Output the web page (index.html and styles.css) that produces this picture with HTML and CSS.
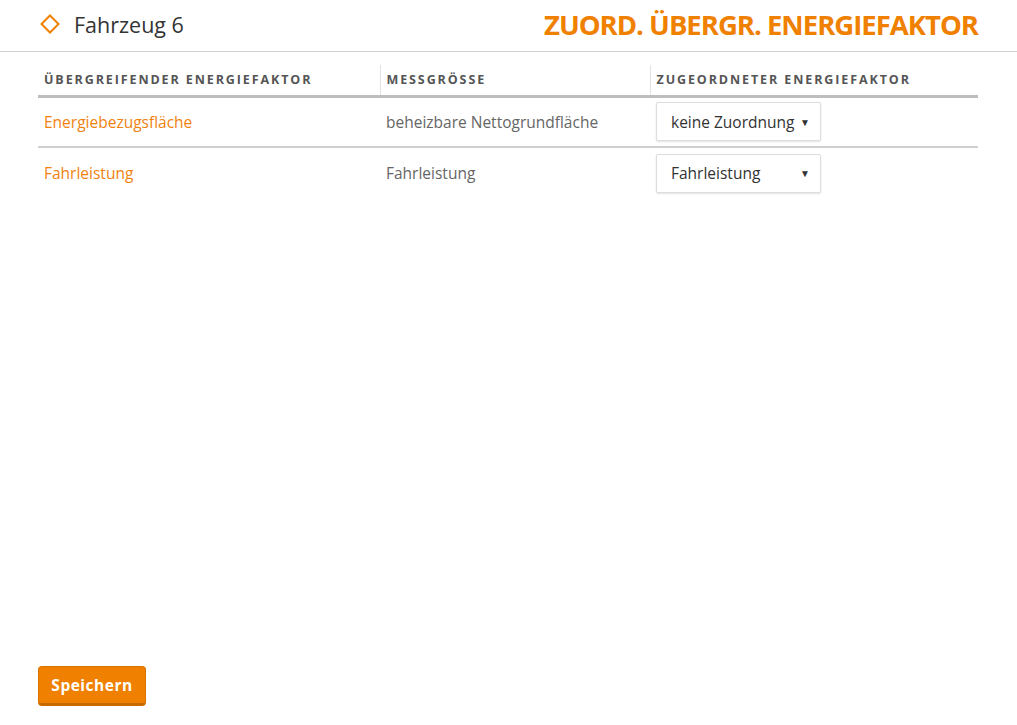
FILE: index.html
```html
<!DOCTYPE html>
<html lang="de">
<head>
<meta charset="utf-8">
<title>Zuord. übergr. Energiefaktor</title>
<link rel="stylesheet" href="styles.css">
</head>
<body>
<div class="page">
  <header class="topbar">
    <div class="crumb">
      <svg class="diamond" width="22" height="22" viewBox="0 0 22 22"><path d="M11 2.5 L19.5 11 L11 19.5 L2.5 11 Z" fill="none" stroke="#f08000" stroke-width="2"/></svg>
      <span class="crumb-text">Fahrzeug 6</span>
    </div>
    <h1 class="title">ZUORD. ÜBERGR. ENERGIEFAKTOR</h1>
  </header>
  <main class="content">
    <table class="grid">
      <thead>
        <tr>
          <th class="c1">Übergreifender Energiefaktor</th>
          <th class="c2">Messgrösse</th>
          <th class="c3">Zugeordneter Energiefaktor</th>
        </tr>
      </thead>
      <tbody>
        <tr>
          <td class="c1 link">Energiebezugsfläche</td>
          <td class="c2 muted">beheizbare Nettogrundfläche</td>
          <td class="c3"><div class="select"><span>keine Zuordnung</span><span class="arrow">▼</span></div></td>
        </tr>
        <tr>
          <td class="c1 link">Fahrleistung</td>
          <td class="c2 muted">Fahrleistung</td>
          <td class="c3"><div class="select"><span>Fahrleistung</span><span class="arrow">▼</span></div></td>
        </tr>
      </tbody>
    </table>
  </main>
  <footer class="actions">
    <button class="btn">Speichern</button>
  </footer>
</div>
</body>
</html>
```
FILE: styles.css
```css
* { box-sizing: border-box; }
html, body { margin: 0; padding: 0; background: #fff; }
body { font-family: "Open Sans", "Liberation Sans", sans-serif; color: #333; }
.page { width: 1017px; height: 725px; display: flex; flex-direction: column; }
.topbar {
  height: 52px;
  border-bottom: 1px solid #cfcfcf;
  display: flex; align-items: center; justify-content: space-between;
  padding: 0 39px 0 39px;
}
.crumb { display: flex; align-items: center; gap: 13px; margin-top: -3px; }
.diamond { display: block; }
.crumb-text { font-family: "Open Sans", sans-serif; font-size: 21.5px; color: #333; }
.title {
  margin: 0; margin-top: -3px;
  font-family: "Open Sans", sans-serif; font-weight: 700; font-size: 27.5px;
  color: #f08000; letter-spacing: -1px;
}
.content { flex: 1; padding: 13px 39px 0 38px; }
.grid { width: 940px; border-collapse: collapse; font-family: "Open Sans", sans-serif; }
.grid th {
  text-align: left; font-weight: 700; font-size: 12.5px; letter-spacing: 1.9px;
  text-transform: uppercase; color: #555;
  height: 31px; padding: 0 6px; vertical-align: top; padding-top: 6px;
  border-bottom: 3px solid #bdbdbd;
}
.grid th.c2, .grid th.c3 { border-left: 1px solid #e2e2e2; }
.c1 { width: 342px; }
.c2 { width: 270px; }
.grid td { height: 51px; padding: 0 6px; font-size: 15.5px; vertical-align: middle; }
.grid tbody tr:first-child td { border-bottom: 2px solid #cfcfcf; }
.link { color: #f0820f; }
.muted { color: #666; }
.select {
  width: 165px; height: 39px;
  border: 1px solid #ddd; border-radius: 2px;
  box-shadow: 0 1px 2px rgba(0,0,0,0.12);
  display: flex; align-items: center; justify-content: space-between;
  padding: 0 10px 0 14px; font-size: 15.5px; color: #333; background: #fff;
}
.arrow { font-size: 10px; color: #333; }
.actions { padding: 0 0 19px 38px; }
.btn {
  width: 108px; height: 40px;
  background: #f08000; color: #fff;
  border: 1px solid #d87200; border-bottom: 3px solid #c96a00; border-radius: 4px;
  font-family: "Open Sans", sans-serif; font-weight: 700; font-size: 15.5px; letter-spacing: 0.5px;
  padding: 0;
}
```
